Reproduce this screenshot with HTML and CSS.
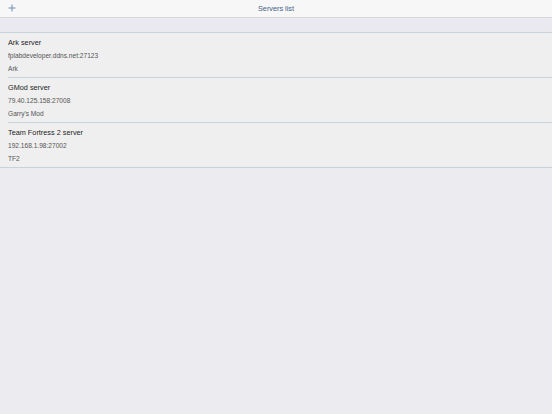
FILE: index.html
```html
<!DOCTYPE html>
<html>
<head>
<meta charset="utf-8">
<link rel="stylesheet" href="styles.css">
</head>
<body>
<header class="navbar">
  <button class="add-btn" aria-label="Add">
    <svg width="8" height="8" viewBox="0 0 8 8"><path d="M4 0.5V7.5M0.5 4H7.5" stroke="#6d8db3" stroke-width="1" fill="none"/></svg>
  </button>
  <div class="nav-title">Servers list</div>
</header>
<div class="band"></div>
<ul class="list">
  <li class="row">
    <div class="name">Ark server</div>
    <div class="detail">fplabdeveloper.ddns.net:27123</div>
    <div class="detail">Ark</div>
  </li>
  <li class="row">
    <div class="name">GMod server</div>
    <div class="detail">79.40.125.158:27008</div>
    <div class="detail">Garry's Mod</div>
  </li>
  <li class="row">
    <div class="name">Team Fortress 2 server</div>
    <div class="detail">192.168.1.98:27002</div>
    <div class="detail">TF2</div>
  </li>
</ul>
</body>
</html>
```
FILE: styles.css
```css
html, body {
  margin: 0;
  padding: 0;
  height: 100%;
}
body {
  background: #ebebf0;
  font-family: "Liberation Sans", Arial, sans-serif;
  -webkit-font-smoothing: antialiased;
}
.navbar {
  height: 17px;
  background: #f7f7f7;
  border-bottom: 1px solid #d8d8d8;
  display: flex;
  align-items: center;
  justify-content: center;
  position: relative;
}
.add-btn {
  position: absolute;
  left: 8px;
  top: 4px;
  width: 8px;
  height: 8px;
  padding: 0;
  border: none;
  background: none;
  display: flex;
}
.nav-title {
  font-size: 7.3px;
  color: #3f6189;
  line-height: 17px;
}
.band {
  height: 14px;
  background: #e9e9ef;
  border-bottom: 1px solid #c9d3de;
}
.list {
  list-style: none;
  margin: 0;
  padding: 0;
  background: #efefef;
}
.row {
  padding: 3px 8px 2px;
  height: 39px;
  position: relative;
  border-bottom: 1px solid #c9d1db;
}
.row:not(:last-child) {
  border-bottom: none;
}
.row:not(:last-child)::after {
  content: "";
  position: absolute;
  left: 8px;
  right: 0;
  bottom: -1px;
  height: 1px;
  background: #c9d1db;
}
.row + .row {
  margin-top: 1px;
}
.name {
  font-size: 7.3px;
  line-height: 13px;
  color: #1e1e1e;
}
.detail {
  font-size: 6.6px;
  line-height: 13px;
  color: #555;
}
```
